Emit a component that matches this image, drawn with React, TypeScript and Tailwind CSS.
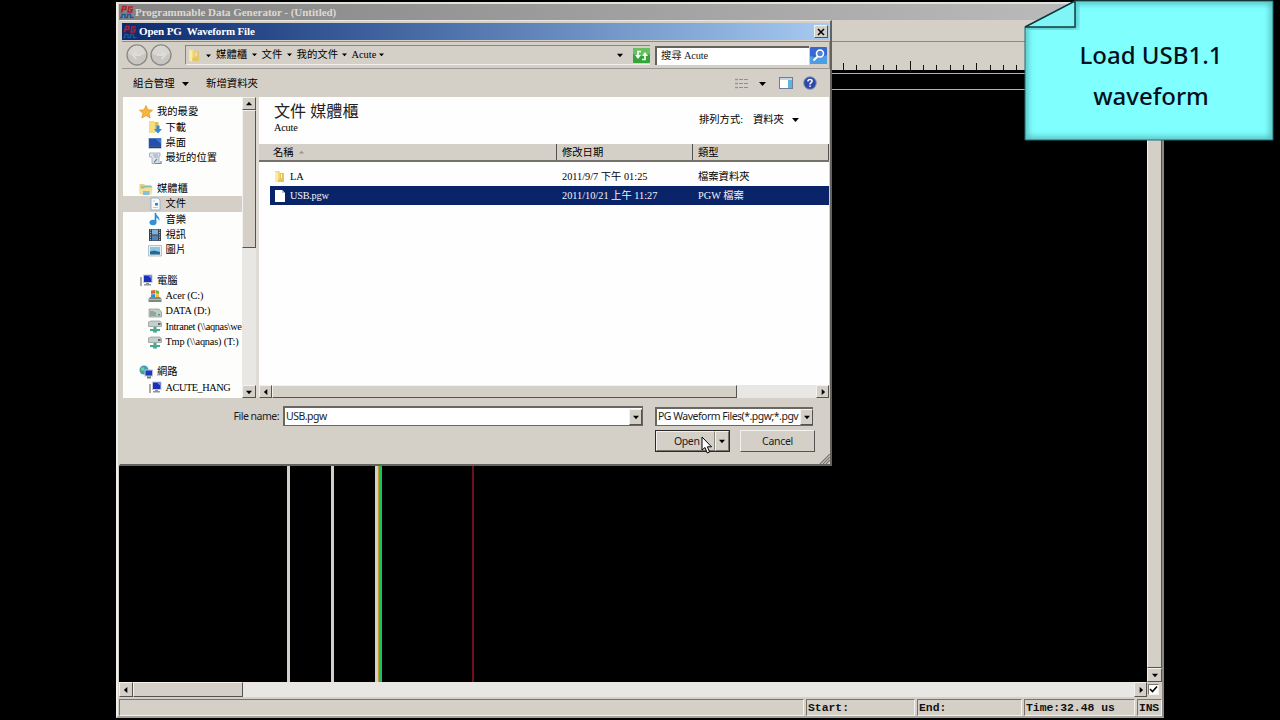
import React from "react";
import clsx from "clsx";

const SERIF = "font-['Liberation_Serif','Noto_Sans_CJK_TC',serif]";
const SANS = "font-['Noto_Sans','Noto_Sans_CJK_TC',sans-serif]";
const RAISED =
  "bg-[#d4d0c8] border border-t-[#f4f2ee] border-l-[#f4f2ee] border-r-[#55534f] border-b-[#55534f]";
const SUNKEN = "border border-t-[#77746e] border-l-[#77746e] border-r-[#f4f2ee] border-b-[#f4f2ee]";

type Dir = "up" | "down" | "left" | "right";

const ARROWS: Record<Dir, string> = {
  up: "M0 5L3.5 1L7 5Z",
  down: "M0 2L7 2L3.5 6Z",
  left: "M5 0L5 7L1 3.5Z",
  right: "M2 0L2 7L6 3.5Z",
};

const Arrow = ({ dir = "down", size = 7, fill = "#000" }: { dir?: Dir; size?: number; fill?: string }) => (
  <svg width={size} height={size} viewBox="0 0 7 7" className="shrink-0">
    <path d={ARROWS[dir]} fill={fill} />
  </svg>
);

const ScrollButton = ({ dir, className }: { dir: Dir; className?: string }) => (
  <div className={clsx("flex items-center justify-center shrink-0", RAISED, className)}>
    <Arrow dir={dir} size={6} />
  </div>
);

const Text = ({ children, w, className }: { children: React.ReactNode; w?: number; className?: string }) => (
  <span className={clsx("whitespace-pre shrink-0", className)} style={w ? { width: w } : undefined}>
    {children}
  </span>
);

/* ---------- icons ---------- */

const AppIcon = () => (
  <svg width="14" height="14" viewBox="0 0 14 14" className="shrink-0">
    <path d="M1.500 7.500L3 1.500H6L5.500 4.500H2.500" fill="none" stroke="#b5202c" strokeWidth="1.700" />
    <path d="M13 2H9L8 7H11.500L12 4.500H10" fill="none" stroke="#b5202c" strokeWidth="1.600" />
    <path d="M0 12.500H2V9.500H5V12.500H7.500V9.500H10.500V12.500H13.500" fill="none" stroke="#1d5696" strokeWidth="1.400" />
  </svg>
);

const Folder = ({ size = 13 }: { size?: number }) => (
  <svg width={size} height={size} viewBox="0 0 13 13" className="shrink-0">
    <path d="M2 1H6L7 2V12H2Z" fill="#f2d873" />
    <path d="M2 1.500L5 2.500V13L2 11.500Z" fill="#faeba6" />
    <path d="M7 3H11V12H5V9H7Z" fill="#e6c65c" />
    <path d="M8 4H9V8H8Z" fill="#fff6c9" />
  </svg>
);

const Page = () => (
  <svg width="13" height="14" viewBox="0 0 13 14" className="shrink-0">
    <path d="M2 1H9L12 4V13H2Z" fill="#fff" />
    <path d="M9 1V4H12Z" fill="#b9c3dd" />
  </svg>
);

const Monitor = () => (
  <>
    <path d="M1 4H3V13H1Z" fill="#a9a9a9" />
    <path d="M4 1.500H13.500V10H4Z" fill="#c3cbd8" />
    <path d="M5 2.500H12.500V9H5Z" fill="#1b2fb4" />
    <path d="M9 2.500H12.500V6Z" fill="#6f8df0" />
    <path d="M7 10H10V11H12V12.500H5V11H7Z" fill="#8d949e" />
  </>
);

const ICONS: Record<string, React.ReactNode> = {
  star: <path d="M7 0.500L8.900 4.800L13.500 5.200L10 8.300L11.200 13L7 10.500L2.800 13L4 8.300L0.500 5.200L5.100 4.800Z" fill="#f9b53b" stroke="#e08f2c" strokeWidth="0.700" />,
  download: (
    <>
      <path d="M1 1H6L7 2V13H1Z" fill="#f4dd83" />
      <path d="M7 2H10.500V12H7Z" fill="#e0bd55" />
      <path d="M8.500 5.500H11.500V9H14L10 13.500L6 9H8.500Z" fill="#2f8bd6" />
    </>
  ),
  desktop: (
    <>
      <path d="M0.500 2H13.500V12.500H0.500Z" fill="#8fa6c8" />
      <path d="M1 2.500H13V10.500H1Z" fill="#2250ac" />
      <path d="M7 2.500H13V8Z" fill="#3c78cf" />
      <path d="M1 10.500H13V12H1Z" fill="#243c70" />
    </>
  ),
  recent: (
    <>
      <path d="M1.500 2H12V5H11V12.500H4V6H1.500Z" fill="#dfe5ec" stroke="#9aa5b3" strokeWidth="0.800" />
      <path d="M5 4H10M6 6H10" stroke="#7e91ab" strokeWidth="0.800" />
      <path d="M6 11.500L9 8M7 12.500H13V10" fill="none" stroke="#6e87a5" strokeWidth="1.200" />
    </>
  ),
  libraries: (
    <>
      <path d="M0.500 2H5L6 3H12V12H0.500Z" fill="#edcf70" />
      <path d="M2 4H13V8H2Z" fill="#8fc4ab" />
      <path d="M0.500 6.500H5L6 5.500H13.500L12.500 12.500H1.500Z" fill="#f4e09a" />
      <path d="M4 9H10.500V13H4Z" fill="#84c2dc" />
    </>
  ),
  docs: (
    <>
      <path d="M3 1H10L12 3V13H3Z" fill="#f6fafd" stroke="#8fa3b8" strokeWidth="0.800" />
      <path d="M5 4H7M5 10.500H10" stroke="#9eb4cc" strokeWidth="0.700" />
      <path d="M7 6H10V8.500H7Z" fill="#3c83b8" />
    </>
  ),
  music: (
    <>
      <path d="M7.500 1V10" stroke="#2480cf" strokeWidth="1.600" />
      <path d="M7.500 0.500C8 4 13 4.500 11 9.500C11 7 9.500 6 7.500 5.500Z" fill="#3698e0" />
      <ellipse cx="5" cy="10.500" rx="3.500" ry="2.700" fill="#3490d8" />
    </>
  ),
  video: (
    <>
      <path d="M1 1H13V13H1Z" fill="#3a4350" />
      <path d="M4 1.500H10V6.500H4Z" fill="#7fb0dc" />
      <path d="M4 7.500H10V12.500H4Z" fill="#4c86bd" />
      <path d="M2.500 1.500V13M11.500 1.500V13" stroke="#aab4be" strokeWidth="1" strokeDasharray="1.200 1.200" />
    </>
  ),
  picture: (
    <>
      <path d="M0.500 2.500H13.500V13H0.500Z" fill="#e9f0f5" stroke="#9cabb8" strokeWidth="0.700" />
      <path d="M2 4H12V11.500H2Z" fill="#8cc7e8" />
      <path d="M2 8.500L6 7.500L12 9V11.500H2Z" fill="#27688c" />
    </>
  ),
  computer: <Monitor />,
  acer: (
    <>
      <path d="M3 1.500L7 1V4.500L3 5Z" fill="#e3632c" />
      <path d="M7.500 1L11 2V5L7.500 4.500Z" fill="#74b53a" />
      <path d="M3 5.500L7 5V8H3Z" fill="#3a88d2" />
      <path d="M7.500 5L11 5.500V8H7.500Z" fill="#f0bf36" />
      <path d="M2 8H12L13.500 10V13H0.500V10Z" fill="#788b84" />
      <path d="M0.500 10H13.500V11H0.500Z" fill="#a9bbb2" />
    </>
  ),
  disk: (
    <>
      <path d="M1 5H11L13.500 8V13H1Z" fill="#c2cac8" stroke="#8a9795" strokeWidth="0.700" />
      <path d="M3 7V12M5 7V12M7 8V12" stroke="#60807a" strokeWidth="1" />
      <path d="M10 10H12V11.500H10Z" fill="#3fa16a" />
    </>
  ),
  netdrive: (
    <>
      <path d="M0.500 3L3 2H12L13.500 4V7.500H0.500Z" fill="#c6cdcc" stroke="#8b9795" strokeWidth="0.700" />
      <path d="M10 4H12.500V6H10Z" fill="#667" />
      <path d="M5.500 8H8.500V10H12V12H9V13.500H5V12H2V10H5.500Z" fill="#45ab8b" />
    </>
  ),
  network: (
    <>
      <circle cx="5" cy="5" r="4.500" fill="#3f9fb8" />
      <path d="M2 3C4 1 6 3 5 5C4 7 2 6 2 3Z" fill="#7fd07a" />
      <path d="M5.500 4.500H14V11.500H5.500Z" fill="#b9c2d2" />
      <path d="M6.500 5.500H13V10.500H6.500Z" fill="#1b3bb8" />
      <path d="M8 11.500H12V13.500H8Z" fill="#68788a" />
    </>
  ),
};

const SideIcon = ({ name }: { name: string }) => (
  <svg width="14" height="14" viewBox="0 0 14 14" className="shrink-0">
    {ICONS[name]}
  </svg>
);

/* ---------- main window ---------- */

const TICKS = Array.from({ length: 24 }, (_, i) => (i % 10 === 5 ? 9 : i % 5 === 0 ? 7 : 5));

const MainWindow = () => (
  <div className="absolute left-[116px] top-[2px] w-[1048px] h-[716px] bg-[#d4d0c8] border-2 border-t-[#e4e1db] border-l-[#f1efeb] border-r-[#8b8883] border-b-[#a5a29c] flex flex-col pl-px">
    <div className="h-4 shrink-0 bg-linear-to-r from-[#838383] to-[#c0c0c0] flex items-center gap-px pl-px">
      <AppIcon />
      <Text className={clsx(SERIF, "font-bold text-[11px] tracking-[-0.030px] text-[#dcd9d2]")}>
        Programmable Data Generator - (Untitled)
      </Text>
    </div>
    <div className="h-[22px] shrink-0 border-b border-[#8d8a84]" />
    <div className="h-[28px] shrink-0 flex items-end pl-[724px] overflow-hidden">
      {TICKS.map((h, i) => (
        <div key={i} className="w-[13.350px] shrink-0">
          <div className="w-px bg-[#111]" style={{ height: h }} />
        </div>
      ))}
    </div>

    <div className="flex flex-1 min-h-0">
      <div className="flex-1 bg-black flex flex-col">
        <div className="mt-[3px] h-px shrink-0 bg-[#c6c60a]" />
        <div className="mt-[15px] h-px shrink-0 bg-[#c6c60a]" />
        <div className="flex flex-1">
          <div className="w-[171px] border-r-[3px] border-[#d2d0cb]" />
          <div className="w-[44px] border-r-[3px] border-[#d2d0cb]" />
          <div className="w-[44px] border-r-[3px] border-[#d2d0cb]" />
          <div className="w-px bg-[#c99a2d]" />
          <div className="w-[3px] bg-[#12c466]" />
          <div className="w-[90px]" />
          <div className="w-[2px] bg-[#6e1019]" />
        </div>
      </div>
      <div className="w-[15px] shrink-0 flex flex-col">
        <div className={clsx("flex-1", RAISED)} />
        <ScrollButton dir="down" className="h-[14px]" />
      </div>
    </div>

    <div className="h-[15px] shrink-0 flex">
      <ScrollButton dir="left" className="w-[14px]" />
      <div className={clsx("w-[110px]", RAISED)} />
      <div className="flex-1 bg-[#e9e7e3]" />
      <ScrollButton dir="right" className="w-[13px]" />
      <div className="w-[15px] flex items-center pl-px">
        <div className={clsx("w-[11px] h-[11px] bg-white", SUNKEN)}>
          <svg width="9" height="9" viewBox="0 0 9 9">
            <path d="M1 4L3.500 6.500L8 1.500" fill="none" stroke="#000" strokeWidth="1.600" />
          </svg>
        </div>
      </div>
    </div>

    <div className="h-[19px] shrink-0 flex gap-[2px] pt-[2px] font-['Liberation_Mono',monospace] font-bold text-[11.400px] leading-[16px] whitespace-pre text-[#111]">
      <div className={clsx("flex-1", SUNKEN)} />
      <div className={clsx("w-[109px] pl-px", SUNKEN)}>Start:</div>
      <div className={clsx("w-[105px] pl-px", SUNKEN)}>End:</div>
      <div className={clsx("w-[111px] pl-px", SUNKEN)}>Time:32.48 us</div>
      <div className={clsx("w-[25px] pl-px tracking-[-0.200px]", SUNKEN)}>INS</div>
    </div>
  </div>
);

/* ---------- dialog ---------- */

const NavButton = ({ flip }: { flip?: boolean }) => (
  <svg width="22" height="22" viewBox="0 0 22 22" className={clsx("shrink-0", flip && "-scale-x-100")}>
    <circle cx="11" cy="11" r="10" fill="#c9c6c1" stroke="#8b8883" strokeWidth="1.300" />
    <path d="M2.500 10A8.500 8.500 0 0 1 19.500 10Q11 13 2.500 10Z" fill="#d8d6d2" />
    <path d="M15 11H7M10.500 7L6.500 11L10.500 15" fill="none" stroke="#dedcd8" strokeWidth="1.800" />
  </svg>
);

const PATH = [
  ["媒體櫃", 36],
  ["文件", 25.5],
  ["我的文件", 45.5],
  ["Acute", 27],
] as const;

const AddressRow = () => (
  <div className="h-[28px] shrink-0 border-y border-r border-t-[#8d8a84] border-b-[#9b9892] border-r-[#9b9892] flex items-center pl-[4px]">
    <NavButton />
    <div className="w-[2px]" />
    <NavButton flip />
    <div className="ml-[13px] w-[465px] h-[20px] border-t border-l border-[#88857f] border-b border-b-[#f1efeb] flex items-center pl-px">
      <Folder size={14} />
      <div className="w-[5px]" />
      <Arrow size={5} />
      <div className={clsx(SERIF, "flex items-center text-[10.400px] leading-[15px] pb-px pl-[5px] text-black")}>
        {PATH.map(([label, w]) => (
          <React.Fragment key={label}>
            <Text w={w}>{label}</Text>
            <span className="w-[5px] mr-[4.500px] flex">
              <Arrow size={5} />
            </span>
          </React.Fragment>
        ))}
      </div>
      <div className="flex-1" />
      <Arrow size={6} />
      <div className="w-[10px]" />
      <svg width="17" height="15" viewBox="0 0 17 15" className="shrink-0">
        <rect width="17" height="15" rx="1" fill="#35a43b" />
        <path d="M0 1Q0 0 1 0H16Q17 0 17 1V6Q8 9 0 6Z" fill="#67bf62" />
        <path d="M8 3.500H5V8" fill="none" stroke="#fff" strokeWidth="1.600" />
        <path d="M2 7H8L5 11Z" fill="#fff" />
        <path d="M9 11.500H12V7" fill="none" stroke="#fff" strokeWidth="1.600" />
        <path d="M9 8H15L12 4Z" fill="#fff" />
      </svg>
    </div>
    <div className={clsx(SERIF, "ml-[5px] w-[154px] h-[19px] bg-white border-t-2 border-l-2 border-[#65625d] flex items-center pl-[4px] text-[10.400px] text-[#222] tracking-[-0.150px]")}>
      <Text>搜尋 Acute</Text>
    </div>
    <svg width="17" height="17" viewBox="0 0 17 17" className="ml-px shrink-0">
      <rect width="17" height="17" rx="1" fill="#3768cf" />
      <path d="M0 9Q9 12 17 8V17H0Z" fill="#4d9ce6" />
      <circle cx="10" cy="6.500" r="3.500" fill="#4d7fdc" stroke="#fff" strokeWidth="1.600" />
      <path d="M7.500 9.500L3.500 13.500" stroke="#fff" strokeWidth="2" />
    </svg>
  </div>
);

const ToolRow = () => (
  <div className={clsx(SERIF, "h-[28px] shrink-0 flex items-center pl-[11px] text-[10.400px]")}>
    <Text w={49} className="pt-px">組合管理</Text>
    <Arrow size={7} />
    <Text className="ml-[17px] pt-px">新增資料夾</Text>
    <div className="flex-1" />
    <svg width="13" height="11" viewBox="0 0 13 11">
      <path d="M0 1.500H3M0 5.500H3M0 9.500H3" stroke="#8f98a4" strokeWidth="1.600" />
      <path d="M4 1.500H8M9 1.500H13M4 5.500H8M9 5.500H13M4 9.500H8M9 9.500H13" stroke="#8d8f92" strokeWidth="1" />
    </svg>
    <div className="w-[11px]" />
    <Arrow size={7} />
    <svg width="14" height="12" viewBox="0 0 14 12" className="ml-[13px]">
      <rect x="0.500" y="0.500" width="13" height="11" fill="#fff" stroke="#6e7f95" />
      <path d="M1 1H13V3H1Z" fill="#c9d4e2" />
      <path d="M9 3H13V11H9Z" fill="#5fb3e0" />
    </svg>
    <svg width="14" height="14" viewBox="0 0 14 14" className="ml-[10px] mr-[13px]">
      <circle cx="7" cy="7" r="6.300" fill="#2b49a8" stroke="#8a93ad" strokeWidth="0.900" />
      <path d="M4.900 5.500C4.900 2.800 9.200 2.900 9.100 5.300C9 6.700 7 6.600 7 8.400M7 9.600V11" fill="none" stroke="#fff" strokeWidth="1.500" />
    </svg>
  </div>
);

type Entry = { icon: string; label: string; top?: boolean; active?: boolean; tracking?: string } | null;

const TREE: Entry[] = [
  { icon: "star", label: "我的最愛", top: true },
  { icon: "download", label: "下載" },
  { icon: "desktop", label: "桌面" },
  { icon: "recent", label: "最近的位置" },
  null,
  { icon: "libraries", label: "媒體櫃", top: true },
  { icon: "docs", label: "文件", active: true },
  { icon: "music", label: "音樂" },
  { icon: "video", label: "視訊" },
  { icon: "picture", label: "圖片" },
  null,
  { icon: "computer", label: "電腦", top: true },
  { icon: "acer", label: "Acer (C:)", tracking: "tracking-[-0.150px]" },
  { icon: "disk", label: "DATA (D:)", tracking: "tracking-[-0.100px]" },
  { icon: "netdrive", label: "Intranet (\\\\aqnas\\we", tracking: "tracking-[-0.300px]" },
  { icon: "netdrive", label: "Tmp (\\\\aqnas) (T:)", tracking: "tracking-[-0.170px]" },
  null,
  { icon: "network", label: "網路", top: true },
  { icon: "computer", label: "ACUTE_HANG", tracking: "tracking-[-0.450px]" },
];

const Sidebar = () => (
  <div className={clsx(SERIF, "w-[119px] shrink-0 bg-[#fdfdfc] pt-[7.500px] overflow-hidden text-[10.300px] text-black")}>
    {TREE.map((item, i) => (
      <div
        key={i}
        className={clsx(
          "h-[15.300px] flex items-center",
          item?.top ? "pl-[16px] gap-[4px]" : "pl-[25px] gap-[3.500px]",
          item?.active && "bg-[#d4d0c8]"
        )}>
        {item && (
          <>
            <SideIcon name={item.icon} />
            <Text className={item.tracking}>{item.label}</Text>
          </>
        )}
      </div>
    ))}
  </div>
);

const FilePane = () => (
  <div className={clsx(SERIF, "flex-1 min-w-0 bg-[#fefefe] flex flex-col text-[10.300px] text-black")}>
    <div className="h-[47px] shrink-0 flex justify-between pl-[15px]">
      <div>
        <div className="text-[16.100px] leading-[20px] pt-[5px] text-[#222] whitespace-pre">文件 媒體櫃</div>
        <div className="leading-[12px] tracking-[-0.200px]">Acute</div>
      </div>
      <div className="flex items-center pr-[30px] h-[45px]">
        <Text w={54}>排列方式:</Text>
        <Text w={39}>資料夾</Text>
        <Arrow size={7} />
      </div>
    </div>
    <div className="h-[18px] shrink-0 bg-[#d4d0c8] border-b-2 border-[#75726c] flex items-center">
      <div className="w-[298px] h-full flex items-center pt-px pl-[14px] gap-[5px] border-r border-[#55534f]">
        <span>名稱</span>
        <Arrow dir="up" size={5} fill="#96938c" />
      </div>
      <div className="w-[136px] h-full flex items-center pt-px pl-[5px] border-r border-[#55534f]">修改日期</div>
      <div className="flex-1 h-full flex items-center pt-px pl-[5px] border-r border-[#55534f]">類型</div>
    </div>
    <div className="flex-1 pt-[5px] pl-[11px]">
      <div className="h-[19px] flex items-center pl-[3px]">
        <Folder />
        <Text w={276} className="pl-[4px]">LA</Text>
        <Text w={136}>2011/9/7 下午 01:25</Text>
        <Text>檔案資料夾</Text>
      </div>
      <div className="h-[19px] flex items-center pl-[3px] bg-[#0a246a] text-[#f2f4fa]">
        <Page />
        <Text w={276} className="pl-[4px] tracking-[-0.250px]">USB.pgw</Text>
        <Text w={136}>2011/10/21 上午 11:27</Text>
        <Text>PGW 檔案</Text>
      </div>
    </div>
    <div className="h-[13px] shrink-0 flex bg-[#e9e7e3]">
      <ScrollButton dir="left" className="w-[13px]" />
      <div className={clsx("w-[465px]", RAISED)} />
      <div className="flex-1" />
      <ScrollButton dir="right" className="w-[13px]" />
    </div>
  </div>
);

const BottomPanel = () => (
  <div className={clsx(SANS, "flex-1 flex flex-col pt-[8px] text-[10.500px] tracking-[-0.500px] text-[#1c1c1c]")}>
    <div className="flex items-center h-[20px]">
      <Text className="w-[157px] pt-px text-right">File name:</Text>
      <div className="ml-[4px] w-[360px] h-[20px] bg-white border-t-2 border-l-2 border-[#6a6762] border-r border-b flex items-center pl-px">
        <Text className="pt-px">USB.pgw</Text>
        <div className="flex-1" />
        <ScrollButton dir="down" className="w-[13px] h-[16px]" />
      </div>
      <div className="ml-[12px] w-[158px] h-[19px] bg-white border-t-2 border-l-2 border-[#6a6762] border-r border-b flex items-center pl-px">
        <Text w={142} className="pt-px">PG Waveform Files(*.pgw;*.pgv</Text>
        <ScrollButton dir="down" className="w-[13px] h-[16px]" />
      </div>
    </div>
    <div className="flex mt-[4px] pl-[533px]">
      <div className="w-[75px] h-[22px] border border-[#2b2a28] flex">
        <div className="flex-1 border border-t-[#f4f2ee] border-l-[#f4f2ee] border-r-[#8b8883] border-b-[#77746e] flex items-center pt-px pl-[17px] tracking-[-0.400px]">Open</div>
        <div className="w-[14px] border border-t-[#f4f2ee] border-l-[#f4f2ee] border-r-[#77746e] border-b-[#77746e] flex items-center justify-center">
          <Arrow size={6} />
        </div>
      </div>
      <div className={clsx("ml-[10px] w-[75px] h-[22px] flex items-center justify-center pt-px tracking-[-0.300px]", RAISED)}>Cancel</div>
    </div>
    <div className="flex-1 flex justify-end items-end">
      <svg width="11" height="10" viewBox="0 0 11 10">
        <path d="M1 10L11 0M4 10L11 3M7 10L11 6" stroke="#77746e" strokeWidth="1.200" />
      </svg>
    </div>
  </div>
);

const Dialog = () => (
  <div className="absolute left-[119px] top-[20px] w-[713px] h-[446px] bg-[#d4d0c8] border-l border-t border-r-2 border-b-2 border-t-[#e9e7e3] border-l-[#d4d0c8] border-r-[#65625d] border-b-[#65625d] pt-[2px] pl-[2px] flex flex-col">
    <div className="h-[17px] shrink-0 mr-px bg-linear-to-r from-[#0c2a70] to-[#a6caf0] flex items-center gap-[2px] pl-px">
      <AppIcon />
      <Text className={clsx(SERIF, "font-bold text-[11px] tracking-[-0.150px] text-white")}>Open PG  Waveform File</Text>
      <div className="flex-1" />
      <div className={clsx("w-[14px] h-[13px] mr-px flex items-center justify-center", RAISED)}>
        <svg width="8" height="8" viewBox="0 0 8 8">
          <path d="M1 1L7 7M7 1L1 7" stroke="#000" strokeWidth="1.500" />
        </svg>
      </div>
    </div>
    <div className="h-px shrink-0" />
    <AddressRow />
    <ToolRow />
    <div className="ml-px mr-px h-[301px] shrink-0 flex bg-white">
      <Sidebar />
      <div className="w-[14px] shrink-0 flex flex-col bg-[#e9e7e3]">
        <ScrollButton dir="up" className="h-[13px]" />
        <div className={clsx("h-[138px]", RAISED)} />
        <div className="flex-1" />
        <ScrollButton dir="down" className="h-[13px]" />
      </div>
      <div className="w-[3px] shrink-0 bg-[#dedbd5]" />
      <FilePane />
    </div>
    <BottomPanel />
  </div>
);

const Note = () => (
  <div className="absolute left-[1024px] top-0 w-[250px] h-[141px]">
    <svg width="250" height="141" viewBox="0 0 250 141" className="absolute inset-0">
      <defs>
        <filter id="soft" x="-10%" y="-10%" width="120%" height="120%">
          <feGaussianBlur stdDeviation="3" />
        </filter>
        <clipPath id="sheet">
          <path d="M1 27L51 1H249V140H1Z" />
        </clipPath>
      </defs>
      <path d="M1 27L51 1H249V140H1Z" fill="#80ffff" />
      <g clipPath="url(#sheet)">
        <path d="M1 27V140H249V1H51" fill="none" stroke="#4aa9ac" strokeWidth="5" filter="url(#soft)" />
        <path d="M1 27H51V1" fill="none" stroke="#3c9c9f" strokeWidth="4" filter="url(#soft)" />
        <path d="M1 27L51 1V27Z" fill="#7ff5f5" />
      </g>
      <path d="M1 27L51 1H249V140H1Z" fill="none" stroke="#23696c" strokeWidth="1" />
      <path d="M1 27L51 1V27Z" fill="none" stroke="#103c40" strokeWidth="1.500" />
    </svg>
    <div className={clsx(SANS, "relative pt-[34px] pl-[4px] text-center font-medium text-[24px] leading-[41px] text-[#06101c]")}>
      <div>Load USB1.1</div>
      <div>waveform</div>
    </div>
  </div>
);

const Cursor = () => (
  <svg width="12" height="19" viewBox="0 0 12 19" className="absolute left-[701px] top-[436px]">
    <path d="M1 1V14L4 11.500L6.200 17L8.600 16L6.400 10.800H10.500Z" fill="#fff" stroke="#000" strokeWidth="1" />
  </svg>
);

const App = () => {
  return (
    <div className="relative w-[1280px] h-[720px] bg-black overflow-hidden">
      <MainWindow />
      <Dialog />
      <Note />
      <Cursor />
    </div>
  );
};

export default App;
